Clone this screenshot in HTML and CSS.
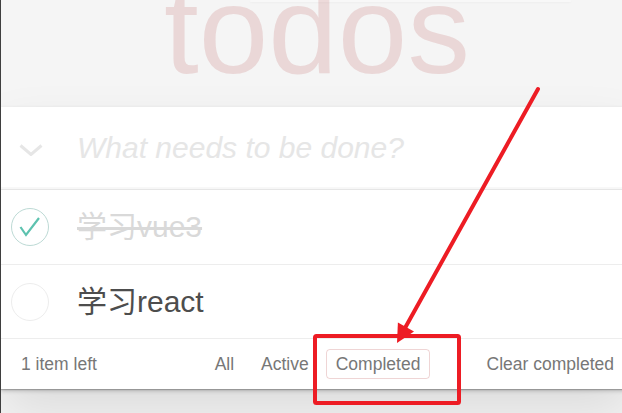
FILE: index.html
```html
<!DOCTYPE html>
<html lang="zh">
<head>
<meta charset="utf-8">
<title>todos</title>
<link rel="stylesheet" href="styles.css">
</head>
<body>
<div class="page">
  <header class="top">
    <div class="glow"></div>
    <h1 class="title">todos</h1>
  </header>
  <section class="app">
    <div class="new-row">
      <svg class="toggle-all" width="24" height="12" viewBox="0 0 24 12"><polyline points="1.5,1.5 12,10.5 22.5,1.5" fill="none" stroke="#e6e6e6" stroke-width="3"/></svg>
      <div class="placeholder">What needs to be done?</div>
    </div>
    <ul class="list">
      <li class="item done">
        <span class="check checked"><svg width="38" height="38" viewBox="0 0 38 38"><polyline points="9.5,19 15,27 28,10" fill="none" stroke="#5dc2af" stroke-width="2.2"/></svg></span>
        <span class="label">学习vue3</span>
      </li>
      <li class="item">
        <span class="check"></span>
        <span class="label">学习react</span>
      </li>
    </ul>
    <footer class="foot">
      <span class="count">1 item left</span>
      <ul class="filters">
        <li><a class="filter">All</a></li>
        <li><a class="filter">Active</a></li>
        <li><a class="filter selected">Completed</a></li>
      </ul>
      <span class="clear">Clear completed</span>
    </footer>
  </section>
  <svg class="annot" width="622" height="413" viewBox="0 0 622 413">
    <line x1="538" y1="89" x2="405" y2="328" stroke="#ed1c24" stroke-width="4" stroke-linecap="round"/>
    <polygon points="397,343 397.9,322.5 414,331.5" fill="#ed1c24"/>
    <rect x="315" y="336" width="144" height="67" rx="1.5" fill="none" stroke="#ed1c24" stroke-width="4"/>
  </svg>
</div>
</body>
</html>
```

FILE: styles.css
```css
* { box-sizing: border-box; }
html, body { margin: 0; padding: 0; }
body {
  background: #f5f5f5;
  font-family: "Liberation Sans", Arial, "Noto Sans CJK SC", sans-serif;
  color: #4d4d4d;
}
.page {
  position: relative;
  width: 622px;
  height: 413px;
  overflow: hidden;
  border-left: 1px solid #3f3f3f;
}
.top {
  height: 107px;
}
.glow {
  margin-left: 249px;
  width: 321px;
  height: 2px;
  border-radius: 2px;
  background: #f8f8f8;
  box-shadow: 0 1px 2px rgba(0,0,0,0.03);
}
.title {
  margin: 0;
  width: 632px;
  height: 105px;
  text-align: center;
  font-size: 125px;
  font-weight: 400;
  line-height: 56px;
  color: rgba(175, 47, 47, 0.15);
}
.app {
  position: relative;
  width: 632px;
  background: #fff;
  box-shadow: 0 2px 4px 0 rgba(0,0,0,0.2), 0 25px 50px 0 rgba(0,0,0,0.1);
}
.new-row {
  display: flex;
  align-items: center;
  height: 83px;
  border-bottom: 1px solid #e6e6e6;
  box-shadow: inset 0 -2px 1px rgba(0,0,0,0.03);
}
.toggle-all {
  margin-left: 18px;
  margin-top: 4px;
  flex: none;
}
.placeholder {
  margin-left: 34px;
  font-size: 30px;
  font-style: italic;
  color: #e6e6e6;
  line-height: 36px;
}
.list {
  list-style: none;
  margin: 0;
  padding: 0;
}
.item {
  display: flex;
  align-items: center;
  height: 75px;
  border-bottom: 1px solid #ededed;
}
.item + .item { height: 74px; }
.check {
  flex: none;
  width: 38px;
  height: 38px;
  margin-left: 10px;
  border: 1px solid #ededed;
  border-radius: 50%;
  position: relative;
}
.check.checked { border-color: #bddad5; }
.check svg { position: absolute; left: -1px; top: -1px; }
.label {
  margin-left: 28px;
  font-family: "Liberation Sans", Arial, "Noto Sans CJK SC", sans-serif;
  font-size: 30px;
  line-height: 36px;
  color: #4d4d4d;
}
.done .label {
  color: #d9d9d9;
  text-decoration: line-through;
}
.foot {
  position: relative;
  display: grid;
  grid-template-columns: 1fr auto 1fr;
  align-items: center;
  height: 50px;
  padding: 0 19px 0 20px;
  font-size: 17.5px;
  color: #777;
}
.foot::before {
  content: "";
  position: absolute;
  left: 0; right: 0; bottom: 0;
  height: 50px;
  z-index: -1;
  box-shadow: 0 1px 1px rgba(0,0,0,0.2);
}
.count { line-height: 20px; }
.filters {
  list-style: none;
  margin: 0;
  padding: 0;
  display: flex;
  gap: 7.5px;
}
.filter {
  display: block;
  padding: 3.75px 8.75px;
  line-height: 20px;
  border: 1px solid transparent;
  border-radius: 3.75px;
  color: #777;
}
.filter.selected { border-color: rgba(175, 47, 47, 0.2); }
.clear {
  justify-self: end;
  line-height: 20px;
}
.annot {
  position: absolute;
  left: -1px;
  top: 0;
  pointer-events: none;
}
```
